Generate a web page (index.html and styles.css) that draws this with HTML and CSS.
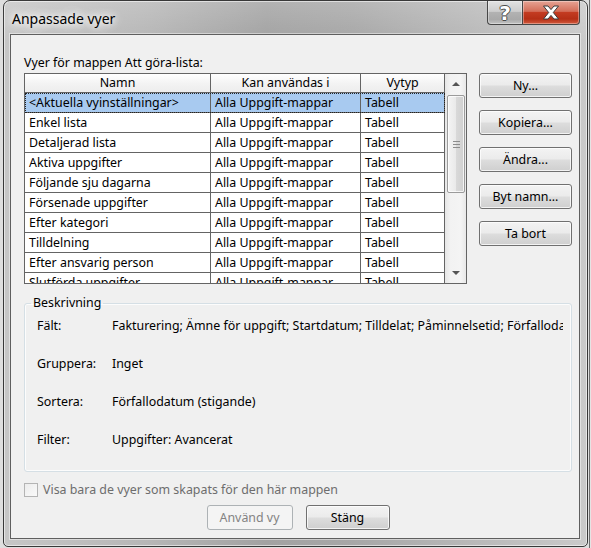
FILE: index.html
```html
<!DOCTYPE html>
<html lang="sv">
<head>
<meta charset="utf-8">
<title>Anpassade vyer</title>
<link rel="stylesheet" href="styles.css">
</head>
<body>
<div class="window">
  <div class="titlebar">
    <div class="title">Anpassade vyer</div>
    <div class="caption-buttons">
      <div class="cap-btn help"><span class="help-glyph">?</span></div>
      <div class="cap-btn close">
        <svg class="close-x" width="18" height="15" viewBox="0 0 18 15">
          <polygon points="1.5,1 6,1 9,4.6 12,1 16.5,1 11.3,7.5 16.5,14 12,14 9,10.4 6,14 1.5,14 6.7,7.5" fill="#ffffff" stroke="#3b3b3b" stroke-width="1" stroke-linejoin="round"/>
        </svg>
      </div>
    </div>
  </div>
  <div class="client">
    <div class="top">
      <div class="left">
        <div class="label">Vyer för mappen Att göra-lista:</div>
        <div class="list">
          <div class="grid">
            <div class="row head"><div class="cell">Namn</div><div class="cell">Kan användas i</div><div class="cell">Vytyp</div></div>
            <div class="row sel"><div class="cell">&lt;Aktuella vyinställningar&gt;</div><div class="cell">Alla Uppgift-mappar</div><div class="cell">Tabell</div></div>
            <div class="row"><div class="cell">Enkel lista</div><div class="cell">Alla Uppgift-mappar</div><div class="cell">Tabell</div></div>
            <div class="row"><div class="cell">Detaljerad lista</div><div class="cell">Alla Uppgift-mappar</div><div class="cell">Tabell</div></div>
            <div class="row"><div class="cell">Aktiva uppgifter</div><div class="cell">Alla Uppgift-mappar</div><div class="cell">Tabell</div></div>
            <div class="row"><div class="cell">Följande sju dagarna</div><div class="cell">Alla Uppgift-mappar</div><div class="cell">Tabell</div></div>
            <div class="row"><div class="cell">Försenade uppgifter</div><div class="cell">Alla Uppgift-mappar</div><div class="cell">Tabell</div></div>
            <div class="row"><div class="cell">Efter kategori</div><div class="cell">Alla Uppgift-mappar</div><div class="cell">Tabell</div></div>
            <div class="row"><div class="cell">Tilldelning</div><div class="cell">Alla Uppgift-mappar</div><div class="cell">Tabell</div></div>
            <div class="row"><div class="cell">Efter ansvarig person</div><div class="cell">Alla Uppgift-mappar</div><div class="cell">Tabell</div></div>
            <div class="row"><div class="cell">Slutförda uppgifter</div><div class="cell">Alla Uppgift-mappar</div><div class="cell">Tabell</div></div>
          </div>
          <div class="vscroll">
            <div class="sb-btn up"><span class="arrow-up"></span></div>
            <div class="thumb"><span class="grip"></span></div>
            <div class="sb-track"></div>
            <div class="sb-btn down"><span class="arrow-down"></span></div>
          </div>
        </div>
      </div>
      <div class="side-buttons">
        <div class="btn">Ny...</div>
        <div class="btn">Kopiera...</div>
        <div class="btn">Ändra...</div>
        <div class="btn">Byt namn...</div>
        <div class="btn">Ta bort</div>
      </div>
    </div>
    <fieldset class="group">
      <legend class="legend">Beskrivning</legend>
      <div class="desc">
        <div class="desc-row"><span class="k">Fält:</span><span class="v">Fakturering; Ämne för uppgift; Startdatum; Tilldelat; Påminnelsetid; Förfallodatum; Slutfört</span></div>
        <div class="desc-row"><span class="k">Gruppera:</span><span class="v">Inget</span></div>
        <div class="desc-row"><span class="k">Sortera:</span><span class="v">Förfallodatum (stigande)</span></div>
        <div class="desc-row"><span class="k">Filter:</span><span class="v">Uppgifter: Avancerat</span></div>
      </div>
    </fieldset>
    <div class="check-row">
      <span class="checkbox"></span>
      <span class="check-label">Visa bara de vyer som skapats för den här mappen</span>
    </div>
    <div class="bottom-buttons">
      <div class="btn disabled wide">Använd vy</div>
      <div class="btn default">Stäng</div>
    </div>
  </div>
</div>
</body>
</html>
```
FILE: styles.css
```css
html, body {
  margin: 0;
  padding: 0;
}
body {
  width: 591px;
  height: 548px;
  overflow: hidden;
  background: linear-gradient(to right, #dedede 0, #dedede 589px, #6e6e6e 589px, #6e6e6e 590px, #e4e4e4 590px);
  font-family: "Noto Sans", sans-serif;
  font-size: 12.4px;
  color: #000;
}

.window {
  margin-left: 3px;
  width: 585px;
  height: 547px;
  box-sizing: border-box;
  border: 1px solid #383838;
  border-radius: 7px 7px 5px 5px;
  padding: 0 7px 7px 6px;
  display: flex;
  flex-direction: column;
  background:
    linear-gradient(to bottom, rgba(255,255,255,0.18), rgba(255,255,255,0) 40px),
    linear-gradient(to right, #c6c6c6 0%, #b6b6b6 25%, #a2a2a2 45%, #a7a7a7 60%, #b8b8b8 80%, #cacaca 100%);
  box-shadow: inset 0 0 0 1px rgba(255,255,255,0.55);
}

.titlebar {
  height: 33px;
  display: flex;
  align-items: flex-start;
  padding-left: 2px;
}
.title {
  margin-top: 8px;
  font-size: 14px;
  line-height: 20px;
  color: #000;
  text-shadow: 0 0 6px #fff, 0 0 10px #fff, 0 0 14px rgba(255,255,255,0.9), 0 0 20px rgba(255,255,255,0.8);
}
.caption-buttons {
  margin-left: auto;
  display: flex;
  height: 24px;
}
.cap-btn {
  height: 24px;
  box-sizing: border-box;
  border: 1px solid #474747;
  border-top: none;
  display: flex;
  align-items: center;
  justify-content: center;
  box-shadow: inset 0 0 0 1px rgba(255,255,255,0.35);
}
.help {
  width: 35px;
  border-right: none;
  border-radius: 0 0 0 4px;
  background: linear-gradient(to bottom, #e2e2e2 0%, #cdcdcd 45%, #b2b2b2 50%, #a9a9a9 80%, #c3c3c3 100%);
}
.help-glyph {
  font-family: "DejaVu Sans", sans-serif;
  font-weight: bold;
  font-size: 20px;
  line-height: 20px;
  color: #fff;
  text-shadow: 1px 0 0 #4a4a4a, -1px 0 0 #4a4a4a, 0 1px 0 #4a4a4a, 0 -1px 0 #4a4a4a;
}
.close {
  width: 58px;
  border-radius: 0 0 4px 0;
  background: linear-gradient(to bottom, #e6a394 0%, #d36e59 45%, #c33b21 50%, #b52f16 78%, #d25a3d 100%);
}
.close-x {
  display: block;
}

.client {
  height: 505px;
  box-sizing: border-box;
  border: 1px solid #5f5f5f;
  background: #f0f0f0;
  padding: 20px 7px 0 13px;
  display: flex;
  flex-direction: column;
  box-shadow: 0 0 0 1px rgba(255,255,255,0.45);
}

.top {
  display: flex;
  gap: 12px;
}
.left {
  width: 443px;
}
.label {
  line-height: 16px;
  height: 16px;
  margin-bottom: 2px;
}

.list {
  display: flex;
  height: 211px;
  box-sizing: border-box;
  border: 1px solid #646464;
  background: #fff;
  overflow: hidden;
}
.grid {
  width: 420px;
  overflow: hidden;
}
.row {
  display: grid;
  grid-template-columns: 186px 150px 84px;
  height: 20px;
}
.cell {
  box-sizing: border-box;
  border-right: 1px solid #646464;
  border-bottom: 1px solid #646464;
  padding-left: 4px;
  line-height: 19px;
  white-space: nowrap;
  overflow: hidden;
}
.row.head {
  height: 19px;
  background: linear-gradient(to bottom, #ffffff, #f3f3f3 50%, #ececec);
}
.row.head .cell {
  line-height: 18px;
  text-align: center;
  padding-left: 0;
}
.row.sel {
  background: #a8caf0;
  outline: 1px dotted #222;
  outline-offset: -1px;
}

.vscroll {
  width: 21px;
  display: flex;
  flex-direction: column;
  background: linear-gradient(to right, #e6e6e6, #f2f2f2 25%, #f4f4f4 75%, #e8e8e8);
}
.sb-btn {
  height: 19px;
  display: flex;
  align-items: center;
  justify-content: center;
}
.sb-btn.down {
  height: 18px;
  margin-bottom: 1px;
}
.arrow-up {
  width: 0;
  height: 0;
  border-left: 4px solid transparent;
  border-right: 4px solid transparent;
  border-bottom: 4px solid #555;
}
.arrow-down {
  width: 0;
  height: 0;
  border-left: 4px solid transparent;
  border-right: 4px solid transparent;
  border-top: 4px solid #555;
}
.thumb {
  margin: 2px 1px 0 2px;
  height: 98px;
  box-sizing: border-box;
  border: 1px solid #9b9b9b;
  border-radius: 2px;
  background: linear-gradient(to right, #f4f4f4, #e9e9e9 50%, #d9d9d9 51%, #d0d0d0);
  box-shadow: inset 0 0 0 1px rgba(255,255,255,0.75);
  display: flex;
  align-items: center;
  justify-content: center;
}
.grip {
  width: 7px;
  height: 7px;
  background: repeating-linear-gradient(to bottom, #8c8c8c 0 1px, transparent 1px 3px);
}
.sb-track {
  flex: 1;
}

.side-buttons {
  width: 93px;
  padding-top: 18px;
  display: flex;
  flex-direction: column;
  gap: 12px;
}

.btn {
  height: 25px;
  box-sizing: border-box;
  border: 1px solid #707070;
  border-radius: 3px;
  background: linear-gradient(to bottom, #f3f3f3 0%, #ebebeb 48%, #dddddd 52%, #cfcfcf 100%);
  box-shadow: inset 0 0 0 1px rgba(255,255,255,0.75);
  display: flex;
  align-items: center;
  justify-content: center;
  line-height: 16px;
  color: #000;
}
.btn.disabled {
  border-color: #adb2b5;
  background: #f4f4f4;
  color: #838383;
  box-shadow: none;
}
.btn.wide {
  width: 86px;
}
.btn.default {
  width: 84px;
}

.group {
  margin: 11px 0 0 0;
  padding: 7px 8px 23px 6px;
  min-width: 0;
  border: 1px solid #d5dfe5;
  border-radius: 3px;
  box-shadow: inset 0 0 0 1px #fcfcfc;
}
.legend {
  padding: 0 2px;
  line-height: 16px;
}
.desc {
  padding-left: 6px;
  display: flex;
  flex-direction: column;
  gap: 22px;
}
.desc-row {
  display: flex;
  height: 16px;
  line-height: 16px;
}
.k {
  width: 75px;
  flex: none;
}
.v {
  flex: 1;
  min-width: 0;
  white-space: nowrap;
  overflow: hidden;
}

.check-row {
  margin-top: 10px;
  display: flex;
  align-items: center;
  height: 16px;
  gap: 5px;
}
.checkbox {
  width: 14px;
  height: 14px;
  box-sizing: border-box;
  border: 1px solid #b4b4b4;
  background: linear-gradient(to bottom right, #ececec, #fafafa);
}
.check-label {
  color: #6d6d6d;
  line-height: 16px;
}

.bottom-buttons {
  margin-top: 7px;
  display: flex;
  justify-content: center;
  gap: 13px;
}
```
